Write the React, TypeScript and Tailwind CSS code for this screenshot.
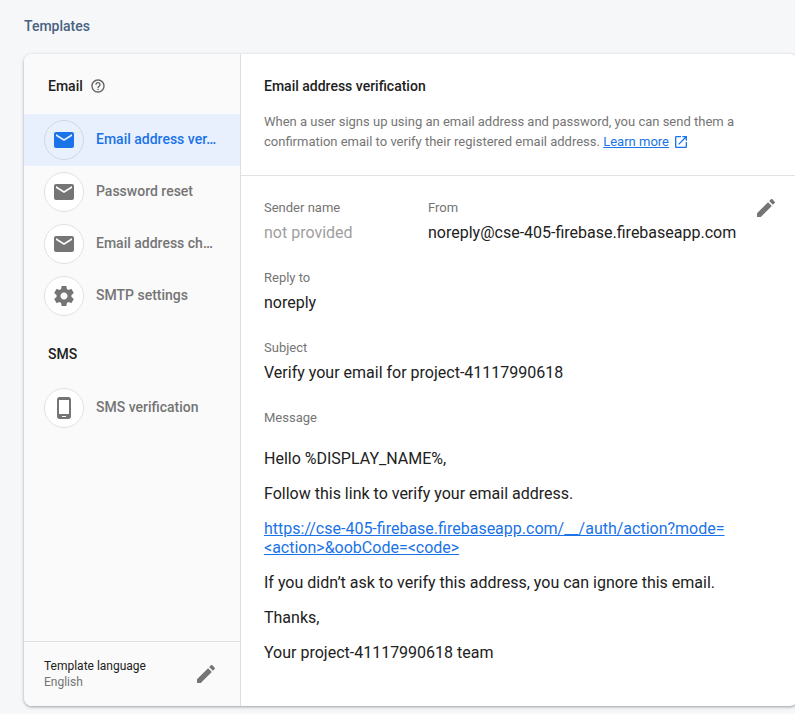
import type { ReactNode } from 'react';

const MAIL = 'M20 4H4c-1.1 0-1.99.9-1.99 2L2 18c0 1.1.9 2 2 2h16c1.1 0 2-.9 2-2V6c0-1.1-.9-2-2-2zm0 4l-8 5-8-5V6l8 5 8-5v2z';
const GEAR = 'M19.43 12.98c.04-.32.07-.64.07-.98s-.03-.66-.07-.98l2.11-1.65c.19-.15.24-.42.12-.64l-2-3.46c-.12-.22-.39-.3-.61-.22l-2.49 1c-.52-.4-1.08-.73-1.69-.98l-.38-2.65C14.46 2.18 14.25 2 14 2h-4c-.25 0-.46.18-.49.42l-.38 2.65c-.61.25-1.17.59-1.69.98l-2.49-1c-.23-.09-.49 0-.61.22l-2 3.46c-.13.22-.07.49.12.64l2.11 1.65c-.04.32-.07.65-.07.98s.03.66.07.98l-2.11 1.65c-.19.15-.24.42-.12.64l2 3.46c.12.22.39.3.61.22l2.49-1c.52.4 1.08.73 1.69.98l.38 2.65c.03.24.24.42.49.42h4c.25 0 .46-.18.49-.42l.38-2.65c.61-.25 1.17-.59 1.69-.98l2.49 1c.23.09.49 0 .61-.22l2-3.46c.12-.22.07-.49-.12-.64l-2.11-1.65zM12 15.5c-1.93 0-3.5-1.57-3.5-3.5s1.57-3.5 3.5-3.5 3.5 1.57 3.5 3.5-1.57 3.5-3.5 3.5z';
const PHONE = 'M16.5 1h-9C6.1 1 5 2.1 5 3.5v17C5 21.9 6.1 23 7.5 23h9c1.4 0 2.5-1.1 2.5-2.5v-17C19 2.1 17.9 1 16.5 1zM14 21h-4v-1h4v1zm3-3H7V4h10v14z';
const PENCIL = 'M3 17.25V21h3.75L17.81 9.94l-3.75-3.75L3 17.25zM20.71 7.04c.39-.39.39-1.02 0-1.41l-2.34-2.34c-.39-.39-1.02-.39-1.41 0l-1.83 1.83 3.75 3.75 1.83-1.83z';
const HELP = 'M11 18h2v-2h-2v2zm1-16C6.48 2 2 6.48 2 12s4.48 10 10 10 10-4.48 10-10S17.52 2 12 2zm0 18c-4.41 0-8-3.59-8-8s3.59-8 8-8 8 3.59 8 8-3.59 8-8 8zm0-14c-2.21 0-4 1.79-4 4h2c0-1.1.9-2 2-2s2 .9 2 2c0 2-3 1.75-3 5h2c0-2.25 3-2.5 3-5 0-2.21-1.79-4-4-4z';
const OPEN = 'M19 19H5V5h7V3H5c-1.11 0-2 .9-2 2v14c0 1.1.89 2 2 2h14c1.1 0 2-.9 2-2v-7h-2v7zM14 3v2h3.59l-9.83 9.83 1.41 1.41L19 6.41V10h2V3h-7z';

function Icon({ d, className }: { d: string; className: string }) {
  return (
    <svg viewBox="0 0 24 24" fill="currentColor" className={`shrink-0 ${className}`}>
      <path d={d} />
    </svg>
  );
}

function NavItem({ icon, label, active = false }: { icon: string; label: string; active?: boolean }) {
  return (
    <div className={`flex h-13 items-center pl-5 pr-5 ${active ? 'bg-[#e8f0fe] text-[#1a73e8]' : 'text-[#757575]'}`}>
      <div
        className={`flex size-10 shrink-0 items-center justify-center rounded-full border ${
          active ? 'border-[#cfd7e5]' : 'border-[#e2e2e2] bg-white'
        }`}
      >
        <Icon d={icon} className="size-6" />
      </div>
      <span className="ml-3 truncate pb-0.5 text-sm leading-5 font-medium">{label}</span>
    </div>
  );
}

function Field({ label, children, muted = false }: { label: string; children: ReactNode; muted?: boolean }) {
  return (
    <div className="h-[70px]">
      <div className="text-[13px] leading-4 text-[#757575]">{label}</div>
      <div className={`mt-[5px] text-base leading-6 ${muted ? 'text-[#9e9e9e]' : ''}`}>{children}</div>
    </div>
  );
}

export default function App() {
  return (
    <div className="h-[714px] w-[795px] overflow-hidden bg-[#f6f7f9] pl-6 font-['Roboto',sans-serif] text-[#212121]">
      <h2 className="pt-4 text-sm leading-5 font-medium text-[#476282]">Templates</h2>
      <div className="mt-[18px] flex h-[652px] w-[774px] overflow-hidden rounded-lg bg-white shadow-[0_1px_2px_0_rgba(60,64,67,0.3),0_1px_3px_1px_rgba(60,64,67,0.15)]">
        <aside className="flex w-[217px] shrink-0 flex-col border-r border-[#dedede] bg-[#fafafa]">
          <div className="flex h-[60px] items-center gap-[7.5px] pt-1 pl-6 text-sm font-medium">
            Email
            <Icon d={HELP} className="size-4 text-[#616161]" />
          </div>
          <NavItem icon={MAIL} label="Email address ver…" active />
          <NavItem icon={MAIL} label="Password reset" />
          <NavItem icon={MAIL} label="Email address ch…" />
          <NavItem icon={GEAR} label="SMTP settings" />
          <div className="flex h-[60px] items-center pt-1 pl-6 text-sm font-medium">SMS</div>
          <NavItem icon={PHONE} label="SMS verification" />
          <div className="mt-auto flex h-[65px] items-center justify-between border-t border-[#dedede] pr-[22px] pl-5">
            <div className="text-xs leading-4">
              <div>Template language</div>
              <div className="text-[#757575]">English</div>
            </div>
            <Icon d={PENCIL} className="size-6 text-[#757575]" />
          </div>
        </aside>
        <main className="min-w-0 flex-1">
          <header className="h-[122px] border-b border-[#e2e2e2] pt-[22px] pl-[23px]">
            <h3 className="text-sm leading-5 font-medium">Email address verification</h3>
            <p className="mt-4 text-[13px] leading-5 text-[#757575]">
              When a user signs up using an email address and password, you can send them a
              <br />
              confirmation email to verify their registered email address.{' '}
              <a className="text-[#1a73e8] underline">Learn more</a>
              <Icon d={OPEN} className="ml-1 inline size-4 align-[-4px] text-[#1a73e8]" />
            </p>
          </header>
          <div className="pt-6 pl-[23px]">
            <div className="flex">
              <div className="w-[164px]">
                <Field label="Sender name" muted>not provided</Field>
              </div>
              <div className="w-[317px]">
                <Field label="From">noreply@cse-405-firebase.firebaseapp.com</Field>
              </div>
              <Icon d={PENCIL} className="mt-[-4px] ml-[9px] size-6 text-[#757575]" />
            </div>
            <Field label="Reply to">noreply</Field>
            <Field label="Subject">Verify your email for project-41117990618</Field>
            <div className="text-[13px] leading-4 text-[#757575]">Message</div>
            <div className="mt-[23px] flex w-[476px] flex-col gap-4 text-base leading-[19px]">
              <p>Hello %DISPLAY_NAME%,</p>
              <p>Follow this link to verify your email address.</p>
              <p className="text-[#1a73e8] underline">
                https://cse-405-firebase.firebaseapp.com/__/auth/action?mode=
                <br />
                &lt;action&gt;&amp;oobCode=&lt;code&gt;
              </p>
              <p>If you didn’t ask to verify this address, you can ignore this email.</p>
              <p>Thanks,</p>
              <p>Your project-41117990618 team</p>
            </div>
          </div>
        </main>
      </div>
    </div>
  );
}
